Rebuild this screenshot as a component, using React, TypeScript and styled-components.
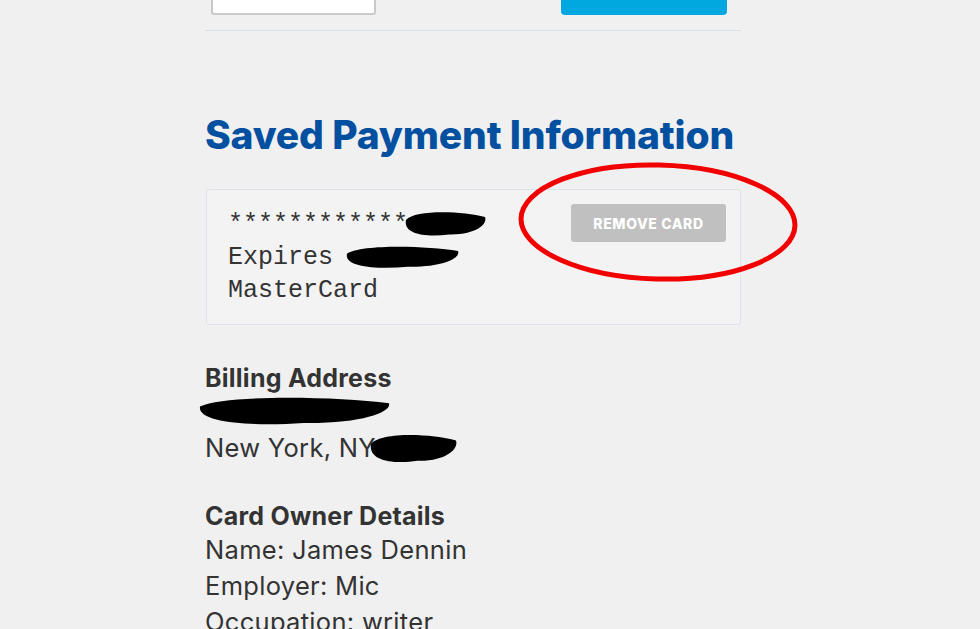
import React from 'react';
import styled, { createGlobalStyle } from 'styled-components';

const GlobalStyle = createGlobalStyle`
  html, body {
    margin: 0;
    padding: 0;
    background: #f0f0f0;
    overflow: hidden;
  }
  body {
    font-family: Inter, "Noto Sans", sans-serif;
    color: #333;
  }
`;

const Page = styled.div`
  position: relative;
  width: 980px;
  height: 629px;
  overflow: hidden;
`;

const Column = styled.div`
  width: 536px;
  margin-left: 205px;
`;

const FormRow = styled.div`
  display: flex;
  justify-content: space-between;
  align-items: flex-end;
  margin-top: -32px;
  padding: 0 14px 0 6px;
`;

const TextInput = styled.div`
  width: 161px;
  height: 43px;
  background: #fff;
  border: 2px solid #c9c9c9;
  border-radius: 3px;
`;

const PrimaryButton = styled.div`
  width: 166px;
  height: 47px;
  background: #00a8df;
  border-radius: 4px;
`;

const Divider = styled.hr`
  border: 0;
  border-top: 1px solid #d6dee7;
  margin: 15px 0 0;
`;

const Heading = styled.h1`
  margin: 81px 0 31px;
  font-size: 39px;
  font-weight: 800;
  letter-spacing: -0.15px;
  color: #0450a0;
  line-height: 46px;
  white-space: nowrap;
`;

const CardBox = styled.div`
  position: relative;
  display: flex;
  justify-content: space-between;
  align-items: flex-start;
  margin-left: 1px;
  padding: 14px 14px 17px 21px;
  background: #f3f3f3;
  border: 1px solid #dde3ea;
  border-radius: 3px;
`;

const CardText = styled.div`
  font-family: "Liberation Mono", "Courier New", monospace;
  font-size: 25px;
  line-height: 33px;
  color: #333;
  padding-top: 4px;
  white-space: pre;
`;

const RemoveButton = styled.button`
  width: 155px;
  height: 38px;
  background: #c0c0c0;
  border: 0;
  border-radius: 3px;
  color: #fff;
  font-family: Inter, sans-serif;
  font-weight: 800;
  font-size: 14px;
  letter-spacing: 0.6px;
`;

const Section = styled.div`
  margin-top: ${({ $top }: { $top: number }) => $top}px;
`;

const Label = styled.div`
  font-size: 25px;
  font-weight: 700;
  line-height: 32px;
  letter-spacing: 0.25px;
  color: #333;
  white-space: nowrap;
`;

const Line = styled.div`
  font-size: 25.5px;
  line-height: 36px;
  letter-spacing: 0.3px;
  color: #333;
  min-height: 36px;
  white-space: nowrap;
`;

const Redaction = styled.svg`
  position: absolute;
  pointer-events: none;
`;

const Annotation = styled.svg`
  position: absolute;
  left: 516px;
  top: 160px;
  pointer-events: none;
`;

function Blob({ x, y, w, h }: { x: number; y: number; w: number; h: number }) {
  return (
    <Redaction
      style={{ left: x, top: y }}
      width={w}
      height={h}
      viewBox={`0 0 ${w} ${h}`}
    >
      <path
        d={`M4 ${h * 0.4} C ${w * 0.15} ${h * 0.05}, ${w * 0.7} ${h * 0.1}, ${w - 3} ${h * 0.3}
            C ${w} ${h * 0.55}, ${w * 0.85} ${h * 0.9}, ${w * 0.55} ${h * 0.88}
            C ${w * 0.3} ${h * 0.98}, 1 ${h * 0.9}, 4 ${h * 0.4} Z`}
        fill="#000"
      />
    </Redaction>
  );
}

export default function App() {
  return (
    <>
      <GlobalStyle />
      <Page>
        <Column>
          <FormRow>
            <TextInput />
            <PrimaryButton />
          </FormRow>
          <Divider />
          <Heading>Saved Payment Information</Heading>
          <CardBox>
            <CardText>{'************\nExpires\nMasterCard'}</CardText>
            <RemoveButton>REMOVE CARD</RemoveButton>
          </CardBox>
          <Section $top={37}>
            <Label>Billing Address</Label>
            <Line>&nbsp;</Line>
            <Line>New York, NY</Line>
          </Section>
          <Section $top={34}>
            <Label>Card Owner Details</Label>
            <Line>Name: James Dennin</Line>
            <Line>Employer: Mic</Line>
            <Line>Occupation: writer</Line>
          </Section>
        </Column>

        <Blob x={402} y={208} w={86} h={30} />
        <Blob x={343} y={243} w={118} h={27} />
        <Blob x={196} y={393} w={196} h={34} />
        <Blob x={367} y={430} w={92} h={35} />

        <Annotation width={284} height={126} viewBox="0 0 284 126">
          <ellipse
            cx="142"
            cy="62"
            rx="137"
            ry="57"
            fill="none"
            stroke="#f20000"
            strokeWidth="5"
            transform="rotate(1.5 142 62)"
          />
        </Annotation>
      </Page>
    </>
  );
}
